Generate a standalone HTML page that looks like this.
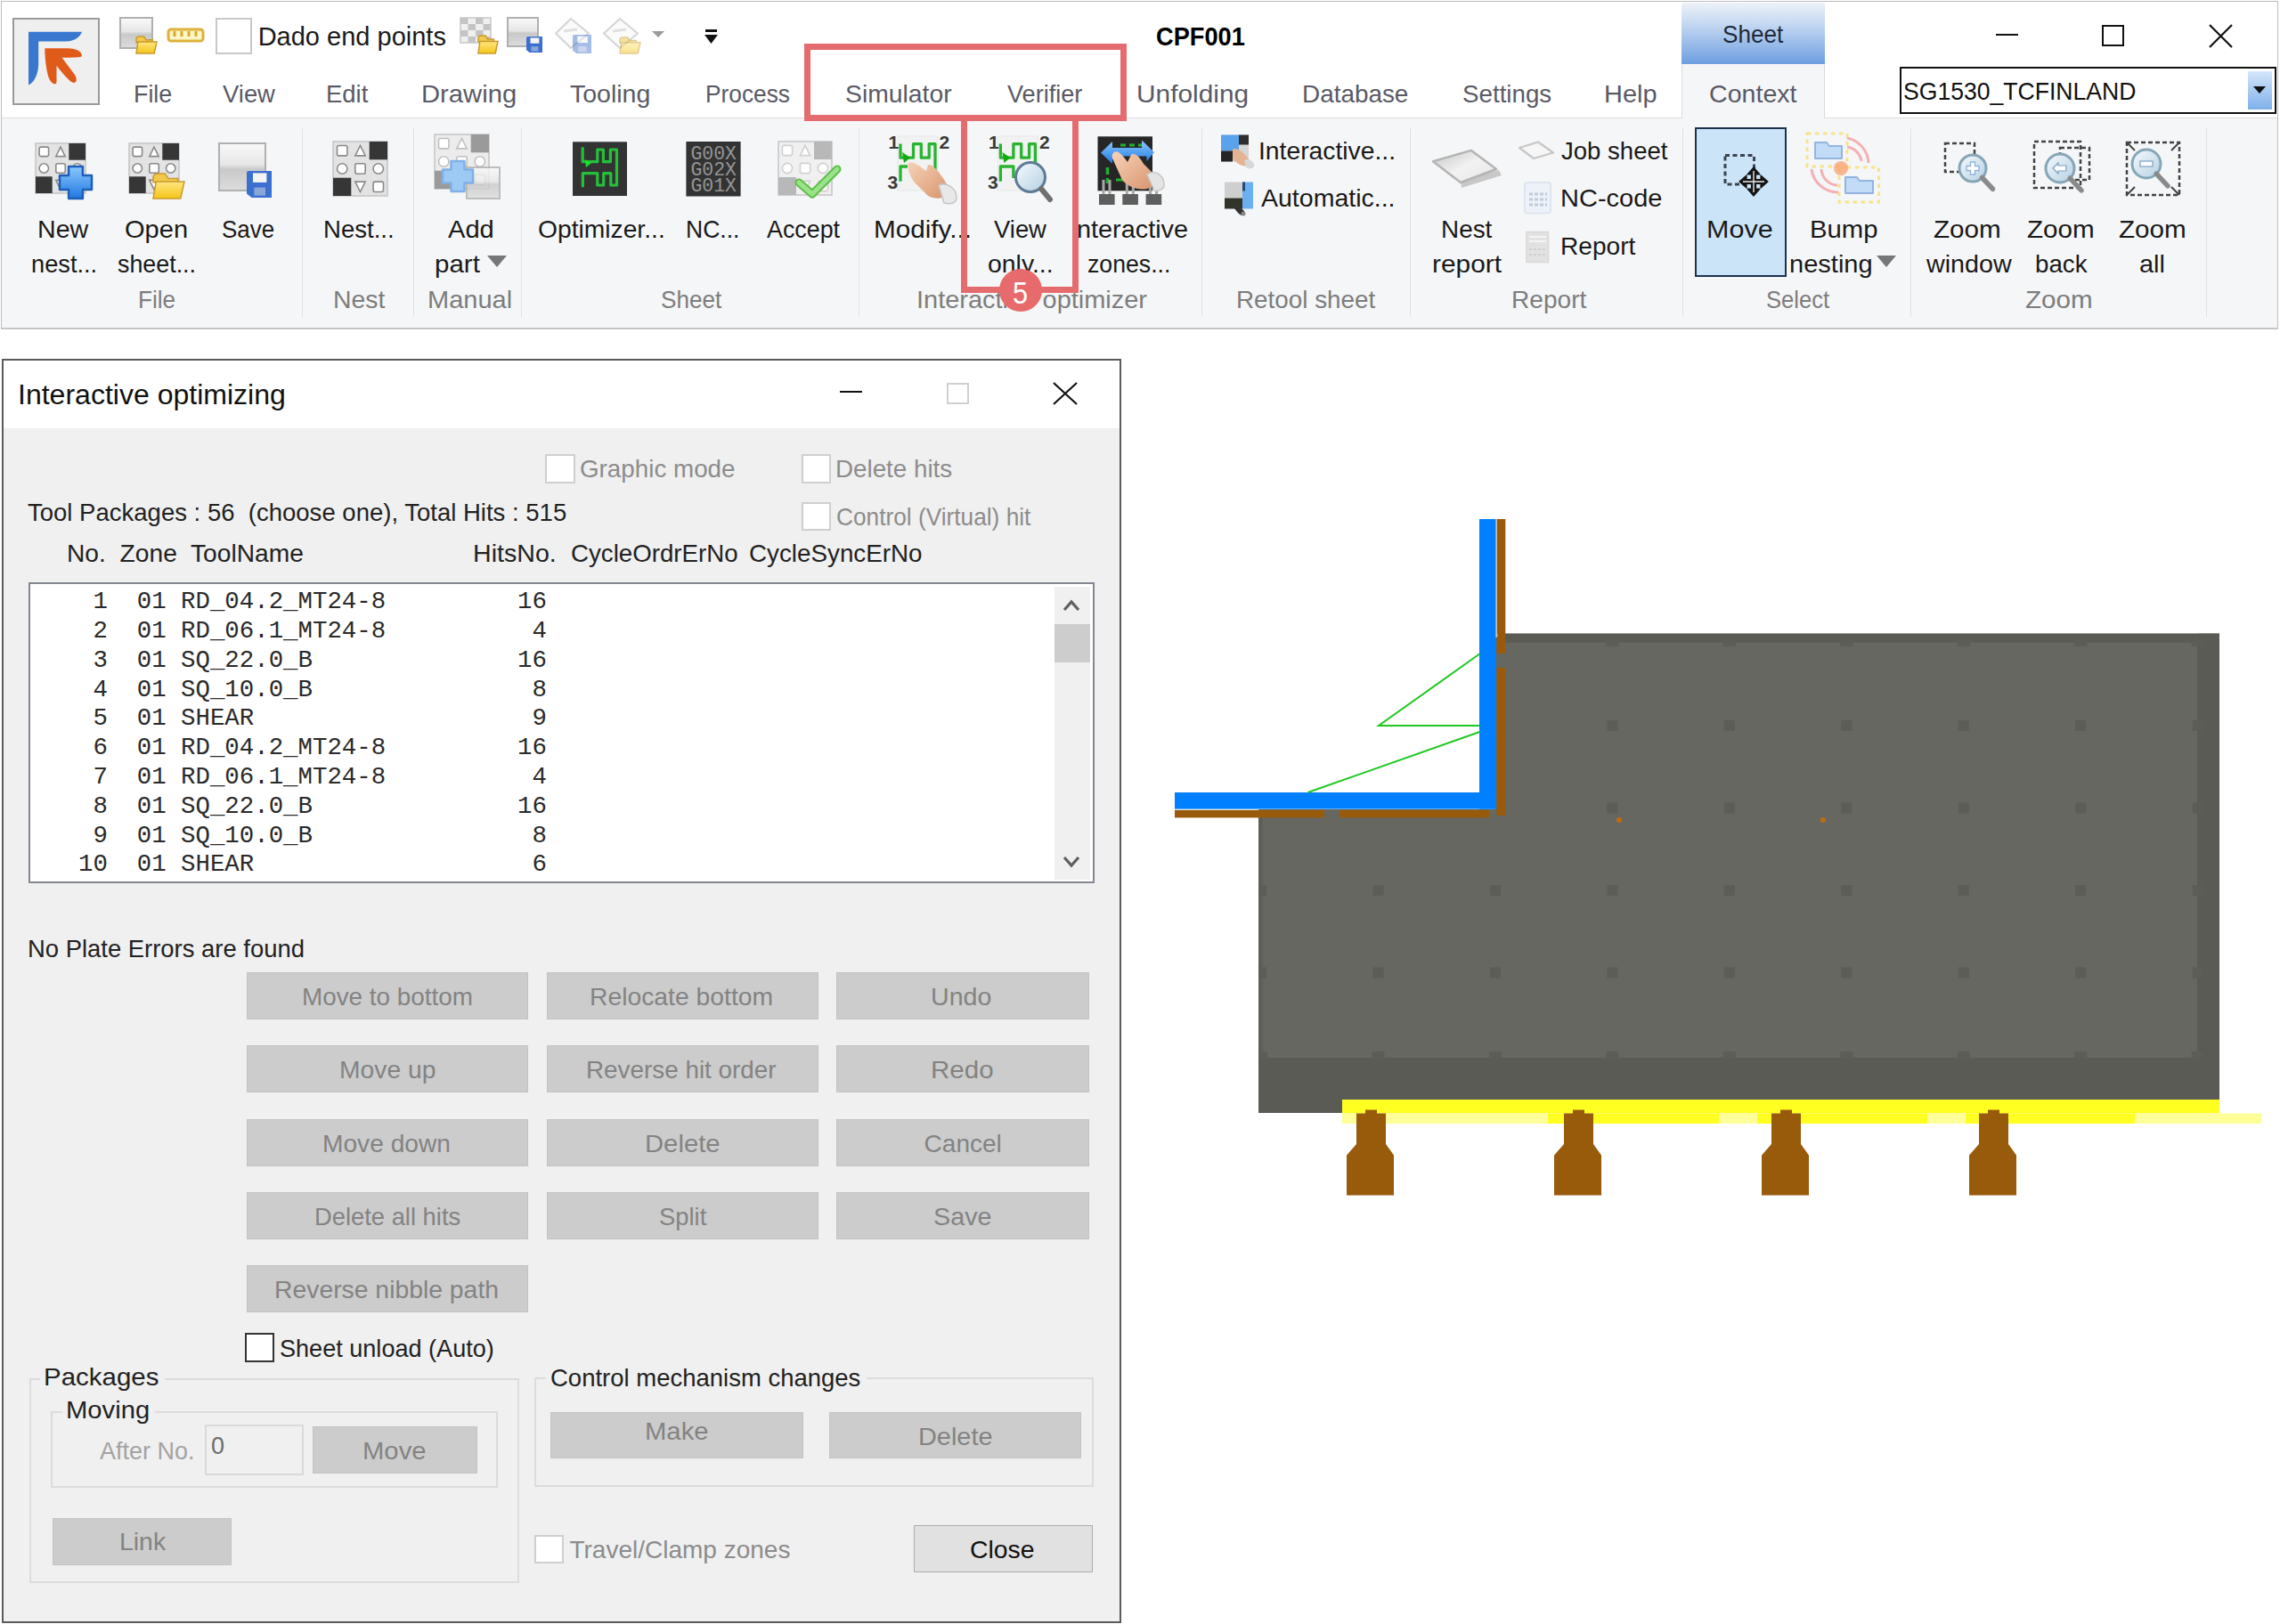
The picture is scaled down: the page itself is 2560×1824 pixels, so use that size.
<!DOCTYPE html>
<html><head><meta charset="utf-8"><style>
html,body{margin:0;padding:0;width:2560px;height:1824px;overflow:hidden;background:#fff}
.t{position:absolute;white-space:pre;line-height:0;transform-origin:0 0}
svg{overflow:visible}
</style></head><body>
<div style="position:absolute;left:0px;top:0px;width:2560px;height:1824px;background:#ffffff"></div>
<div style="position:absolute;left:1px;top:1px;width:2557px;height:369px;border:1px solid #bdbdbd;box-sizing:border-box;background:#ffffff"></div>
<div style="position:absolute;left:2px;top:133px;width:2555px;height:235px;background:#f5f6f7"></div>
<div style="position:absolute;left:2px;top:132px;width:2555px;height:1px;background:#dadbdc"></div>
<div style="position:absolute;left:2px;top:368px;width:2556px;height:2px;background:#c6c6c6"></div>
<div style="position:absolute;left:14px;top:20px;width:98px;height:98px;border:2px solid #9a9a9a;box-sizing:border-box;background:#efefef"></div>
<div style="position:absolute;left:1888px;top:3px;width:161px;height:69px;background:linear-gradient(#eef2f9,#c4d8f2 35%,#6d9ee0)"></div>
<div style="position:absolute;left:1888px;top:72px;width:161px;height:61px;background:#f5f6f7;border-left:1px solid #dadbdc;border-right:1px solid #dadbdc;box-sizing:border-box"></div>
<div style="position:absolute;left:2133px;top:75px;width:423px;height:53px;border:2px solid #111;box-sizing:border-box;background:#fff"></div>
<div style="position:absolute;left:242px;top:20px;width:41px;height:41px;border:2px solid #c8c8c8;box-sizing:border-box;background:#fff"></div>
<div style="position:absolute;left:339px;top:144px;width:1px;height:212px;background:#e1e2e4"></div>
<div style="position:absolute;left:464px;top:144px;width:1px;height:212px;background:#e1e2e4"></div>
<div style="position:absolute;left:585px;top:144px;width:1px;height:212px;background:#e1e2e4"></div>
<div style="position:absolute;left:964px;top:144px;width:1px;height:212px;background:#e1e2e4"></div>
<div style="position:absolute;left:1349px;top:144px;width:1px;height:212px;background:#e1e2e4"></div>
<div style="position:absolute;left:1583px;top:144px;width:1px;height:212px;background:#e1e2e4"></div>
<div style="position:absolute;left:1889px;top:144px;width:1px;height:212px;background:#e1e2e4"></div>
<div style="position:absolute;left:2145px;top:144px;width:1px;height:212px;background:#e1e2e4"></div>
<div style="position:absolute;left:2477px;top:144px;width:1px;height:212px;background:#e1e2e4"></div>
<div style="position:absolute;left:1903px;top:143px;width:103px;height:168px;background:#cce4f7;border:2px solid #1c3350;box-sizing:border-box"></div>
<div style="position:absolute;left:2241px;top:38px;width:25px;height:2px;background:#111"></div>
<div style="position:absolute;left:2360px;top:28px;width:25px;height:24px;border:2px solid #111;box-sizing:border-box"></div>
<div style="position:absolute;left:2524px;top:80px;width:27px;height:43px;background:linear-gradient(#d5e6fa,#7fb0ea)"></div>
<svg style="position:absolute;left:2480px;top:27px" width="27" height="27" viewBox="0 0 27 27"><path d="M1 1L26 26M26 1L1 26" stroke="#111" stroke-width="2.2"/></svg>
<svg style="position:absolute;left:2529px;top:96px" width="16" height="10" viewBox="0 0 16 10"><path d="M1 1H15L8 9Z" fill="#111"/></svg>
<svg style="position:absolute;left:547px;top:287px" width="22" height="13" viewBox="0 0 22 13"><path d="M0 0H22L11 13Z" fill="#777"/></svg>
<svg style="position:absolute;left:2107px;top:287px" width="22" height="13" viewBox="0 0 22 13"><path d="M0 0H22L11 13Z" fill="#777"/></svg>
<svg style="position:absolute;left:0px;top:0px" width="2560" height="370" viewBox="0 0 2560 370"><defs>
<linearGradient id="gSheet" x1="0" y1="0" x2="0" y2="1"><stop offset="0" stop-color="#fafafa"/><stop offset="0.45" stop-color="#e6e6e6"/><stop offset="0.55" stop-color="#c9c9c9"/><stop offset="1" stop-color="#dcdcdc"/></linearGradient>
<linearGradient id="gFolder" x1="0" y1="0" x2="0" y2="1"><stop offset="0" stop-color="#ffe680"/><stop offset="1" stop-color="#f5c518"/></linearGradient>
<linearGradient id="gBlue" x1="0" y1="0" x2="0" y2="1"><stop offset="0" stop-color="#8cc8ff"/><stop offset="1" stop-color="#1f78e0"/></linearGradient>
<linearGradient id="gLens" x1="0" y1="0" x2="1" y2="1"><stop offset="0" stop-color="#f6fafd"/><stop offset="1" stop-color="#b4cfe3"/></linearGradient>
<linearGradient id="gSkin" x1="0" y1="0" x2="1" y2="1"><stop offset="0" stop-color="#f6d2b8"/><stop offset="1" stop-color="#d9956e"/></linearGradient>
</defs><path d="M32 35.7H92C90 41 84 46.5 74 46.5H43.2V72C43 84 38 93 32 95.5Z" fill="#3a78d0"/><path d="M50.3 54.3H76C86 54.3 92 58 92 63C92 64.5 80 64.8 69.6 64.8L84 84C87 89 86 93 83 93C80 93 75 88 63.5 74V92C63.5 96 58 95 55 88C52 80 50.3 65 50.3 54.3Z" fill="#e05a1a"/><rect x="135" y="20" width="36" height="34" fill="url(#gSheet)" stroke="#b0b0b0" stroke-width="2" opacity="1"/><g opacity="1"><path d="M153 43.85Q153 41 156.8 41H161.6L164.0 44.8H171.2V47.65H153Z" fill="#f2c94c" stroke="#c99a2e" stroke-width="1.5"/>
<path d="M154.88 47.08H176L173.12 60H153Z" fill="url(#gFolder)" stroke="#c99a2e" stroke-width="1.5"/></g><rect x="189" y="33" width="39" height="13" rx="3" fill="#fff6c8" stroke="#dcb23a" stroke-width="3"/><path d="M196 35V41" stroke="#d8ac2a" stroke-width="3"/><path d="M204 35V41" stroke="#d8ac2a" stroke-width="3"/><path d="M212 35V41" stroke="#d8ac2a" stroke-width="3"/><path d="M220 35V41" stroke="#d8ac2a" stroke-width="3"/><rect x="517" y="20" width="34" height="28" fill="#f0f0f0" stroke="#c8c8c8" stroke-width="1.5"/><rect x="517.0" y="20" width="8.5" height="7" fill="#c4c4c4"/><rect x="534.0" y="20" width="8.5" height="7" fill="#c4c4c4"/><rect x="525.5" y="27" width="8.5" height="7" fill="#c4c4c4"/><rect x="542.5" y="27" width="8.5" height="7" fill="#c4c4c4"/><rect x="517.0" y="34" width="8.5" height="7" fill="#c4c4c4"/><rect x="534.0" y="34" width="8.5" height="7" fill="#c4c4c4"/><rect x="525.5" y="41" width="8.5" height="7" fill="#c4c4c4"/><rect x="542.5" y="41" width="8.5" height="7" fill="#c4c4c4"/><g opacity="1"><path d="M537 43.0Q537 40 540.6 40H545.2L547.5 44.0H554.4V47.0H537Z" fill="#f2c94c" stroke="#c99a2e" stroke-width="1.5"/>
<path d="M538.76 46.4H559L556.24 60H537Z" fill="url(#gFolder)" stroke="#c99a2e" stroke-width="1.5"/></g><rect x="570" y="20" width="34" height="32" fill="url(#gSheet)" stroke="#b0b0b0" stroke-width="2" opacity="1"/><g opacity="1"><path d="M591 43Q591 41 593 41H609V59H594.6L591 56.3Z" fill="#3b6fd0"/>
<rect x="595.5" y="42.44" width="9.9" height="6.3" fill="#f4f4f4"/>
<rect x="596.4" y="52.16" width="8.1" height="5.3999999999999995" fill="#8aa6d8"/></g><path d="M641 21L661 37.5L641 54L624 37.5Z" fill="#fbfbfb" stroke="#d6d6d6" stroke-width="2.2" stroke-linejoin="round"/><path d="M633 35L648 33" stroke="#e0e0e0" stroke-width="3"/><g opacity="0.45"><path d="M643 41Q643 39 645 39H664V60H647.2L643 56.849999999999994Z" fill="#3b6fd0"/>
<rect x="648.25" y="40.68" width="11.55" height="7.35" fill="#f4f4f4"/>
<rect x="649.3" y="52.019999999999996" width="9.450000000000001" height="6.3" fill="#8aa6d8"/></g><path d="M696 21L716 37.5L696 54L678 37.5Z" fill="#fbfbfb" stroke="#d6d6d6" stroke-width="2.2" stroke-linejoin="round"/><path d="M688 35L703 33" stroke="#e0e0e0" stroke-width="3"/><g opacity="0.5"><path d="M696 44.7Q696 42 699.8 42H704.6L707.0 45.6H714.2V48.3H696Z" fill="#f2c94c" stroke="#c99a2e" stroke-width="1.5"/>
<path d="M697.88 47.76H719L716.12 60H696Z" fill="url(#gFolder)" stroke="#c99a2e" stroke-width="1.5"/></g><path d="M732 35H746L739 42Z" fill="#9a9a9a"/><rect x="792" y="33" width="13" height="3" fill="#111"/><path d="M791 39H806L798.5 49Z" fill="#111"/><rect x="40" y="161" width="56" height="56" fill="#e3e3e3" stroke="#c4c4c4" stroke-width="1.5"/><rect x="77.3" y="161.0" width="18.7" height="18.7" fill="#363636"/><rect x="40.0" y="198.3" width="18.7" height="18.7" fill="#363636"/><rect x="44.1" y="165.1" width="10.5" height="10.5" rx="2" fill="#fff" stroke="#8a8a8a" stroke-width="1.6"/><path d="M68.0 165.1L73.2 175.6H62.8Z" fill="#fff" stroke="#8a8a8a" stroke-width="1.6"/><circle cx="49.3" cy="189.0" r="5.2" fill="#fff" stroke="#8a8a8a" stroke-width="1.6"/><rect x="62.8" y="183.8" width="10.5" height="10.5" rx="2" fill="#fff" stroke="#8a8a8a" stroke-width="1.6"/><circle cx="86.7" cy="189.0" r="5.2" fill="#fff" stroke="#8a8a8a" stroke-width="1.6"/><path d="M68.0 212.9L73.2 202.4H62.8Z" fill="#fff" stroke="#8a8a8a" stroke-width="1.6"/><rect x="81.4" y="202.4" width="10.5" height="10.5" rx="2" fill="#fff" stroke="#8a8a8a" stroke-width="1.6"/><path d="M77.08 187.0H92.92V197.08H103.0V212.92H92.92V223.0H77.08V212.92H67.0V197.08H77.08Z" fill="url(#gBlue)" stroke="#1f5fb8" stroke-width="2.5" stroke-linejoin="round" opacity="1"/><rect x="145" y="161" width="56" height="56" fill="#e3e3e3" stroke="#c4c4c4" stroke-width="1.5"/><rect x="182.3" y="161.0" width="18.7" height="18.7" fill="#363636"/><rect x="145.0" y="198.3" width="18.7" height="18.7" fill="#363636"/><rect x="149.1" y="165.1" width="10.5" height="10.5" rx="2" fill="#fff" stroke="#8a8a8a" stroke-width="1.6"/><path d="M173.0 165.1L178.2 175.6H167.8Z" fill="#fff" stroke="#8a8a8a" stroke-width="1.6"/><circle cx="154.3" cy="189.0" r="5.2" fill="#fff" stroke="#8a8a8a" stroke-width="1.6"/><rect x="167.8" y="183.8" width="10.5" height="10.5" rx="2" fill="#fff" stroke="#8a8a8a" stroke-width="1.6"/><circle cx="191.7" cy="189.0" r="5.2" fill="#fff" stroke="#8a8a8a" stroke-width="1.6"/><path d="M173.0 212.9L178.2 202.4H167.8Z" fill="#fff" stroke="#8a8a8a" stroke-width="1.6"/><rect x="186.4" y="202.4" width="10.5" height="10.5" rx="2" fill="#fff" stroke="#8a8a8a" stroke-width="1.6"/><g opacity="1"><path d="M172 199.2Q172 195 178.2 195H185.4L189.0 200.6H199.8V204.8H172Z" fill="#f2c94c" stroke="#c99a2e" stroke-width="1.5"/>
<path d="M175.32 203.96H207L202.68 223H172Z" fill="url(#gFolder)" stroke="#c99a2e" stroke-width="1.5"/></g><rect x="246" y="161" width="52" height="53" fill="url(#gSheet)" stroke="#b0b0b0" stroke-width="2" opacity="1"/><g opacity="1"><path d="M277 194Q277 192 279 192H305V222H282.6L277 217.5Z" fill="#3b6fd0"/>
<rect x="284.0" y="194.4" width="15.400000000000002" height="10.5" fill="#f4f4f4"/>
<rect x="285.4" y="210.6" width="12.6" height="9.0" fill="#8aa6d8"/></g><rect x="374" y="159" width="61" height="61" fill="#e3e3e3" stroke="#c4c4c4" stroke-width="1.5"/><rect x="414.7" y="159.0" width="20.3" height="20.3" fill="#363636"/><rect x="374.0" y="199.7" width="20.3" height="20.3" fill="#363636"/><rect x="378.5" y="163.5" width="11.4" height="11.4" rx="2" fill="#fff" stroke="#8a8a8a" stroke-width="1.6"/><path d="M404.5 163.5L410.2 174.9H398.8Z" fill="#fff" stroke="#8a8a8a" stroke-width="1.6"/><circle cx="384.2" cy="189.5" r="5.7" fill="#fff" stroke="#8a8a8a" stroke-width="1.6"/><rect x="398.8" y="183.8" width="11.4" height="11.4" rx="2" fill="#fff" stroke="#8a8a8a" stroke-width="1.6"/><circle cx="424.8" cy="189.5" r="5.7" fill="#fff" stroke="#8a8a8a" stroke-width="1.6"/><path d="M404.5 215.5L410.2 204.1H398.8Z" fill="#fff" stroke="#8a8a8a" stroke-width="1.6"/><rect x="419.1" y="204.1" width="11.4" height="11.4" rx="2" fill="#fff" stroke="#8a8a8a" stroke-width="1.6"/><rect x="488" y="151" width="61" height="61" fill="#ececec" stroke="#c4c4c4" stroke-width="1.5"/><rect x="528.7" y="151.0" width="20.3" height="20.3" fill="#9a9a9a"/><rect x="488.0" y="191.7" width="20.3" height="20.3" fill="#9a9a9a"/><rect x="492.5" y="155.5" width="11.4" height="11.4" rx="2" fill="#fff" stroke="#c0c0c0" stroke-width="1.6"/><path d="M518.5 155.5L524.2 166.9H512.8Z" fill="#fff" stroke="#c0c0c0" stroke-width="1.6"/><circle cx="498.2" cy="181.5" r="5.7" fill="#fff" stroke="#c0c0c0" stroke-width="1.6"/><rect x="512.8" y="175.8" width="11.4" height="11.4" rx="2" fill="#fff" stroke="#c0c0c0" stroke-width="1.6"/><circle cx="538.8" cy="181.5" r="5.7" fill="#fff" stroke="#c0c0c0" stroke-width="1.6"/><path d="M518.5 207.5L524.2 196.1H512.8Z" fill="#fff" stroke="#c0c0c0" stroke-width="1.6"/><rect x="533.1" y="196.1" width="11.4" height="11.4" rx="2" fill="#fff" stroke="#c0c0c0" stroke-width="1.6"/><rect x="524" y="188" width="37" height="35" fill="url(#gSheet)" stroke="#b0b0b0" stroke-width="2" opacity="0.8"/><path d="M506.52 181.0H521.48V190.52H531.0V205.48H521.48V215.0H506.52V205.48H497.0V190.52H506.52Z" fill="#9ccaf5" stroke="#7fb0e6" stroke-width="2.5" stroke-linejoin="round" opacity="1"/><rect x="643" y="159.3" width="61" height="60.7" fill="#333"/><path d="M654.2 166.6V181.7H670.8V168H677.4V181.7H685.4V168H692.5V208H685.8V194.7H677.7V208H670.8V194.7H654.4V209" stroke="#25c03a" stroke-width="3.2" fill="none" stroke-linejoin="round" stroke-linecap="round"/><path d="M657 179L664 183L658 188Z" fill="#1fdc30"/><rect x="770.4" y="159" width="61.2" height="61.5" fill="#333"/><text x="775.5" y="179.2" font-family="Liberation Mono" font-size="22" fill="#959595" textLength="51.5" lengthAdjust="spacingAndGlyphs">G00X</text><text x="775.5" y="197.2" font-family="Liberation Mono" font-size="22" fill="#959595" textLength="51.5" lengthAdjust="spacingAndGlyphs">G02X</text><text x="775.5" y="215.2" font-family="Liberation Mono" font-size="22" fill="#959595" textLength="51.5" lengthAdjust="spacingAndGlyphs">G01X</text><rect x="874" y="159" width="60" height="60" fill="#f0f0f0" stroke="#c4c4c4" stroke-width="1.5"/><rect x="914.0" y="159.0" width="20.0" height="20.0" fill="#b8b8b8"/><rect x="874.0" y="199.0" width="20.0" height="20.0" fill="#b8b8b8"/><rect x="878.4" y="163.4" width="11.2" height="11.2" rx="2" fill="#fff" stroke="#d0d0d0" stroke-width="1.6"/><path d="M904.0 163.4L909.6 174.6H898.4Z" fill="#fff" stroke="#d0d0d0" stroke-width="1.6"/><circle cx="884.0" cy="189.0" r="5.6" fill="#fff" stroke="#d0d0d0" stroke-width="1.6"/><rect x="898.4" y="183.4" width="11.2" height="11.2" rx="2" fill="#fff" stroke="#d0d0d0" stroke-width="1.6"/><circle cx="924.0" cy="189.0" r="5.6" fill="#fff" stroke="#d0d0d0" stroke-width="1.6"/><path d="M904.0 214.6L909.6 203.4H898.4Z" fill="#fff" stroke="#d0d0d0" stroke-width="1.6"/><rect x="918.4" y="203.4" width="11.2" height="11.2" rx="2" fill="#fff" stroke="#d0d0d0" stroke-width="1.6"/><path d="M897 205L912 218L940 190" stroke="#5fbf4a" stroke-width="9" fill="none" stroke-linecap="round" stroke-linejoin="round"/><path d="M897 205L912 218L940 190" stroke="#9be38a" stroke-width="5" fill="none" stroke-linecap="round" stroke-linejoin="round"/><rect x="1008" y="153" width="45" height="61" fill="#f2f2f2" stroke="#e8e8e8"/><text x="997.5" y="166.8" font-family="Liberation Sans" font-weight="bold" font-size="21" fill="#3a3a3a">1</text><text x="1054.5" y="166.8" font-family="Liberation Sans" font-weight="bold" font-size="21" fill="#3a3a3a">2</text><text x="996.5" y="212.2" font-family="Liberation Sans" font-weight="bold" font-size="21" fill="#3a3a3a">3</text><path d="M1011 161.6V177.2H1025.5V161.6H1034.3V177.2H1043.2V161.6H1050V191M1011 203.8V187H1019" stroke="#27b52f" stroke-width="3.3" fill="none" stroke-linejoin="round"/><path d="M1013 171L1022 177L1015 183Z" fill="#11aa11"/><path d="M1020 183C1024 180 1032 186 1040 192L1042 185C1046 184 1052 190 1056 196C1062 204 1066 210 1062 218C1058 224 1050 224 1042 220L1026 204C1022 198 1018 188 1020 183Z" fill="url(#gSkin)"/><path d="M1054 208C1064 204 1074 212 1074 222C1074 228 1068 230 1060 228Z" fill="#e8e8e8" stroke="#c4c4c4" stroke-width="1.5"/><rect x="1120.4" y="153" width="45" height="61" fill="#f2f2f2" stroke="#e8e8e8"/><text x="1109.9" y="166.8" font-family="Liberation Sans" font-weight="bold" font-size="21" fill="#3a3a3a">1</text><text x="1166.9" y="166.8" font-family="Liberation Sans" font-weight="bold" font-size="21" fill="#3a3a3a">2</text><text x="1108.9" y="212.2" font-family="Liberation Sans" font-weight="bold" font-size="21" fill="#3a3a3a">3</text><path d="M1123.4 161.6V177.2H1137.9V161.6H1146.7V177.2H1155.6000000000001V161.6H1162.4V191M1123.4 203.8V187H1137.9V200" stroke="#27b52f" stroke-width="3.3" fill="none" stroke-linejoin="round"/><path d="M1125.4 171L1134.4 177L1127.4 183Z" fill="#11aa11"/><circle cx="1157" cy="199" r="16.5" fill="url(#gLens)" stroke="#5d7b96" stroke-width="3"/><path d="M1169 212L1179 224" stroke="#707070" stroke-width="6" stroke-linecap="round"/><rect x="1232.5" y="153.3" width="61.5" height="61" fill="#262626"/><path d="M1258 163H1282" stroke="#22b030" stroke-width="3" stroke-dasharray="6 4"/><path d="M1243.5 188V206" stroke="#22b030" stroke-width="3.5" stroke-dasharray="8 4"/><path d="M1253 202H1263" stroke="#22b030" stroke-width="3"/><path d="M1236 171.5L1249 159V166H1282V157.5L1296 171L1287.5 181V175.5H1249V184Z" fill="url(#gBlue)"/><rect x="1234.0" y="218" width="17.6" height="12" fill="#5e5e5e"/><rect x="1237.5" y="202" width="3" height="16" fill="#a8a8a8"/><rect x="1244.5" y="202" width="3" height="16" fill="#a8a8a8"/><rect x="1260.3" y="218" width="17.6" height="12" fill="#5e5e5e"/><rect x="1263.8" y="202" width="3" height="16" fill="#a8a8a8"/><rect x="1270.8" y="202" width="3" height="16" fill="#a8a8a8"/><rect x="1286.6" y="218" width="17.6" height="12" fill="#5e5e5e"/><rect x="1290.1" y="202" width="3" height="16" fill="#a8a8a8"/><rect x="1297.1" y="202" width="3" height="16" fill="#a8a8a8"/><path d="M1251 171C1255 168 1262 176 1266 182L1270 174C1273 170 1280 176 1284 184L1292 192C1298 200 1296 210 1288 212C1278 214 1266 210 1260 202L1250 180C1248 176 1248 173 1251 171Z" fill="url(#gSkin)"/><path d="M1288 196C1296 190 1306 196 1307 206C1308 212 1302 215 1296 214Z" fill="#e4e4e4" stroke="#c8c8c8" stroke-width="1.5"/><rect x="1371" y="151.5" width="31" height="30" fill="#d6d6d6"/><rect x="1371" y="151.5" width="20" height="18" fill="#5aa2ea"/><rect x="1391" y="151.5" width="11" height="11" fill="#2e2e2e"/><rect x="1371" y="169.5" width="13" height="12" fill="#262626"/><path d="M1384 168C1388 165 1394 170 1398 174C1404 180 1406 184 1402 186C1396 188 1388 184 1384 178Z" fill="#e3b393"/><path d="M1397 180C1403 177 1409 182 1408 187C1407 190 1402 190 1399 188Z" fill="#d8d8d8"/><rect x="1375" y="204.5" width="20" height="18" fill="#cfcfcf"/><rect x="1395" y="204.5" width="12" height="30" fill="#6ab0f0"/><rect x="1395" y="204.5" width="3" height="10" fill="#234a78"/><rect x="1375" y="222.5" width="20" height="12" fill="#303428"/><path d="M1388 228L1396 236C1399 239 1398 242 1395 242C1392 242 1389 238 1386 234Z" fill="#333"/><circle cx="1396" cy="240" r="2.5" fill="#888"/><defs><linearGradient id="gNR" x1="0" y1="0" x2="1" y2="1"><stop offset="0" stop-color="#c4c4c4"/><stop offset="0.5" stop-color="#f2f2f2"/><stop offset="1" stop-color="#e6e6e6"/></linearGradient></defs><path d="M1640 203L1683 191L1686 197L1641 211Z" fill="#c8c8c8"/><path d="M1609 181.3L1652 168.9L1680 190L1640 205Z" fill="url(#gNR)" stroke="#b4b4b4" stroke-width="2.5" stroke-linejoin="round"/><path d="M1706 166L1727 159.5L1744 171.5L1722 178Z" fill="#f6f6f6" stroke="#c6c6c6" stroke-width="2.2" stroke-linejoin="round"/><rect x="1712" y="205" width="29" height="34.5" rx="3" fill="#edf1f8" stroke="#dfe5f0" stroke-width="2"/><path d="M1717 218H1737M1717 224H1737M1717 230H1737" stroke="#c3cbda" stroke-width="3" stroke-dasharray="4 2"/><rect x="1714" y="260.5" width="24.5" height="34" fill="#e2e2e2" stroke="#d8d8d8" stroke-width="1.5"/><path d="M1717 266H1736M1717 271H1736" stroke="#f4f4f4" stroke-width="2"/><path d="M1717 280H1736M1717 286H1736" stroke="#d0d0d0" stroke-width="2" stroke-dasharray="3 2"/><path d="M1937 174.5H1969.5V190M1953 207H1937V174.5" fill="none" stroke="#3a4550" stroke-width="3" stroke-dasharray="5 3.5"/><g transform="translate(1969 204)"><path d="M0 -16L7 -8H2.5V-2.5H8V-7L16 0L8 7V2.5H2.5V8H7L0 16L-7 8H-2.5V2.5H-8V7L-16 0L-8 -7V-2.5H-2.5V-8H-7Z" fill="#141414" stroke="#141414" stroke-width="1.2" stroke-linejoin="round"/><path d="M0 -12V12M-12 0H12" stroke="#e8e8e8" stroke-width="1.4"/></g><rect x="2029" y="150" width="45" height="37" fill="none" stroke="#f7e38a" stroke-width="3" stroke-dasharray="4.5 4.5"/><rect x="2065" y="188" width="44.5" height="39" fill="none" stroke="#f7e38a" stroke-width="3" stroke-dasharray="4.5 4.5"/><path d="M2074 155A30 30 0 0 1 2098 183M2074 165A19 19 0 0 1 2090 181M2064 216A30 30 0 0 1 2034 190M2063 208A19 19 0 0 1 2045 190" stroke="#f4b0b4" stroke-width="3" fill="none"/><circle cx="2067" cy="189" r="8" fill="#f9a070" opacity="0.75"/><path d="M2038 160H2051L2054 164H2068V178H2038Z" fill="#c2dbf6" stroke="#94b4e0" stroke-width="2" stroke-linejoin="round"/><path d="M2072 199H2085L2088 203H2103V217H2072Z" fill="#c2dbf6" stroke="#94b4e0" stroke-width="2" stroke-linejoin="round"/><rect x="2184" y="161" width="33" height="32" fill="none" stroke="#444" stroke-width="2.5" stroke-dasharray="5 3"/><circle cx="2215" cy="189" r="15" fill="url(#gLens)" stroke="#86a6b8" stroke-width="3"/><path d="M2225.5 199.5L2237.5 212.25" stroke="#8a8a8a" stroke-width="5.5" stroke-linecap="round"/><path d="M2212.5 182H2217.5V186.5H2222V191.5H2217.5V196H2212.5V191.5H2208V186.5H2212.5Z" fill="#fff" stroke="#8fb0d8" stroke-width="1.3"/><rect x="2284" y="159" width="52" height="52" fill="none" stroke="#444" stroke-width="2.5" stroke-dasharray="5 3"/><rect x="2313" y="166" width="33" height="36" fill="none" stroke="#444" stroke-width="2.5" stroke-dasharray="5 3"/><circle cx="2313" cy="189" r="16" fill="url(#gLens)" stroke="#86a6b8" stroke-width="3"/><path d="M2324.2 200.2L2337.0 213.8" stroke="#8a8a8a" stroke-width="5.5" stroke-linecap="round"/><path d="M2305 189L2311 183V186H2320V192H2311V195Z" fill="#fff" stroke="#7da0c0" stroke-width="1.2"/><rect x="2388" y="160" width="59" height="59" fill="none" stroke="#444" stroke-width="2.5" stroke-dasharray="5 3"/><path d="M2388 160L2397 169M2447 160L2438 169M2388 219L2397 210M2447 219L2438 210" stroke="#444" stroke-width="2"/><circle cx="2410" cy="184" r="16" fill="url(#gLens)" stroke="#86a6b8" stroke-width="3"/><path d="M2421.2 195.2L2434.0 208.8" stroke="#8a8a8a" stroke-width="5.5" stroke-linecap="round"/><rect x="2403" y="181" width="14" height="6" fill="#fff" stroke="#7da0c0" stroke-width="1.2"/></svg>
<svg style="position:absolute;left:1400px;top:570px" width="1160" height="800" viewBox="1400 570 1160 800">
<defs><clipPath id="plateClip"><path d="M1689 711.5H2492V1250H1413V909H1679V716H1689Z"/></clipPath></defs><path d="M1689 711.5H2492V1250H1413V909H1679V716H1689Z" fill="#676761"/><g clip-path="url(#plateClip)">
<rect x="1689" y="711.5" width="803" height="10" fill="#5b5b55"/>
<rect x="2467" y="711.5" width="25" height="538.5" fill="#5b5b55"/>
<rect x="1413" y="1188" width="1079" height="62" fill="#5b5b55"/>
<rect x="1413" y="918" width="5" height="270" fill="#5f5f59"/>
<rect x="1410.0" y="994" width="12" height="12" fill="#5d5d57"/><rect x="1410.0" y="1086.5" width="12" height="12" fill="#5d5d57"/><rect x="1541.47" y="994" width="12" height="12" fill="#5d5d57"/><rect x="1541.47" y="1086.5" width="12" height="12" fill="#5d5d57"/><rect x="1672.94" y="994" width="12" height="12" fill="#5d5d57"/><rect x="1672.94" y="1086.5" width="12" height="12" fill="#5d5d57"/><rect x="1804.4099999999999" y="809" width="12" height="12" fill="#5d5d57"/><rect x="1804.4099999999999" y="901.5" width="12" height="12" fill="#5d5d57"/><rect x="1804.4099999999999" y="994" width="12" height="12" fill="#5d5d57"/><rect x="1804.4099999999999" y="1086.5" width="12" height="12" fill="#5d5d57"/><rect x="1935.88" y="809" width="12" height="12" fill="#5d5d57"/><rect x="1935.88" y="901.5" width="12" height="12" fill="#5d5d57"/><rect x="1935.88" y="994" width="12" height="12" fill="#5d5d57"/><rect x="1935.88" y="1086.5" width="12" height="12" fill="#5d5d57"/><rect x="2067.35" y="809" width="12" height="12" fill="#5d5d57"/><rect x="2067.35" y="901.5" width="12" height="12" fill="#5d5d57"/><rect x="2067.35" y="994" width="12" height="12" fill="#5d5d57"/><rect x="2067.35" y="1086.5" width="12" height="12" fill="#5d5d57"/><rect x="2198.8199999999997" y="809" width="12" height="12" fill="#5d5d57"/><rect x="2198.8199999999997" y="901.5" width="12" height="12" fill="#5d5d57"/><rect x="2198.8199999999997" y="994" width="12" height="12" fill="#5d5d57"/><rect x="2198.8199999999997" y="1086.5" width="12" height="12" fill="#5d5d57"/><rect x="2330.29" y="809" width="12" height="12" fill="#5d5d57"/><rect x="2330.29" y="901.5" width="12" height="12" fill="#5d5d57"/><rect x="2330.29" y="994" width="12" height="12" fill="#5d5d57"/><rect x="2330.29" y="1086.5" width="12" height="12" fill="#5d5d57"/><rect x="2461.76" y="809" width="12" height="12" fill="#5d5d57"/><rect x="2461.76" y="901.5" width="12" height="12" fill="#5d5d57"/><rect x="2461.76" y="994" width="12" height="12" fill="#5d5d57"/><rect x="2461.76" y="1086.5" width="12" height="12" fill="#5d5d57"/><rect x="1803.4" y="718" width="14" height="8" fill="#5d5d57"/><rect x="1934.8700000000001" y="718" width="14" height="8" fill="#5d5d57"/><rect x="2066.34" y="718" width="14" height="8" fill="#5d5d57"/><rect x="2197.81" y="718" width="14" height="8" fill="#5d5d57"/><rect x="2329.28" y="718" width="14" height="8" fill="#5d5d57"/><rect x="2460.75" y="718" width="14" height="8" fill="#5d5d57"/><rect x="1409.0" y="1181" width="14" height="8" fill="#5d5d57"/><rect x="1540.47" y="1181" width="14" height="8" fill="#5d5d57"/><rect x="1671.94" y="1181" width="14" height="8" fill="#5d5d57"/><rect x="1803.4099999999999" y="1181" width="14" height="8" fill="#5d5d57"/><rect x="1934.88" y="1181" width="14" height="8" fill="#5d5d57"/><rect x="2066.35" y="1181" width="14" height="8" fill="#5d5d57"/><rect x="2197.8199999999997" y="1181" width="14" height="8" fill="#5d5d57"/><rect x="2329.29" y="1181" width="14" height="8" fill="#5d5d57"/><rect x="2460.76" y="1181" width="14" height="8" fill="#5d5d57"/></g>
<rect x="1319" y="890" width="360" height="18.6" fill="#0080ff"/>
<rect x="1661" y="583" width="18.6" height="325.6" fill="#0080ff"/>
<rect x="1680.6" y="583" width="9.7" height="151" fill="#985a0b"/>
<rect x="1680.6" y="750" width="9.7" height="166" fill="#985a0b"/>
<rect x="1680.6" y="712.5" width="1.2" height="1.2" fill="#e8d8c0"/>
<rect x="1319" y="909.8" width="168" height="8.6" fill="#985a0b"/>
<rect x="1504" y="909.8" width="168" height="8.6" fill="#985a0b"/>
<path d="M1661.5 734.3L1548 815H1661.5M1661.5 822L1468.5 890" stroke="#1fc81f" stroke-width="2" fill="none"/>
<circle cx="1818" cy="921" r="3" fill="#c06a10"/>
<circle cx="2047" cy="921" r="3" fill="#c06a10"/>
<rect x="1507" y="1235" width="985" height="15.5" fill="#ffff22"/>
<rect x="1507" y="1250.5" width="1032" height="11.5" fill="#ffff99"/><rect x="1738" y="1250.5" width="192" height="11.5" fill="#ffff22"/><rect x="1973" y="1250.5" width="191" height="11.5" fill="#ffff22"/><rect x="2207" y="1250.5" width="190" height="11.5" fill="#ffff22"/>
</svg>
<svg style="position:absolute;left:1400px;top:570px" width="1160" height="800" viewBox="1400 570 1160 800"><path d="M1523 1250.5H1556V1285L1565 1297.5V1342.5H1512V1297.5L1523 1285Z" fill="#985a0b"/>
<rect x="1533" y="1246.5" width="13" height="12" fill="#985a0b"/><path d="M1756 1250.5H1789V1285L1798 1297.5V1342.5H1745V1297.5L1756 1285Z" fill="#985a0b"/>
<rect x="1766" y="1246.5" width="13" height="12" fill="#985a0b"/><path d="M1989 1250.5H2022V1285L2031 1297.5V1342.5H1978V1297.5L1989 1285Z" fill="#985a0b"/>
<rect x="1999" y="1246.5" width="13" height="12" fill="#985a0b"/><path d="M2222 1250.5H2255V1285L2264 1297.5V1342.5H2211V1297.5L2222 1285Z" fill="#985a0b"/>
<rect x="2232" y="1246.5" width="13" height="12" fill="#985a0b"/></svg>
<div class="t" style="left:149.85px;top:106.10px;font-size:28px;color:#5a5a66;font-weight:normal;font-family:'Liberation Sans', sans-serif;transform:scaleX(0.9587);">File</div>
<div class="t" style="left:250.00px;top:106.10px;font-size:28px;color:#5a5a66;font-weight:normal;font-family:'Liberation Sans', sans-serif;transform:scaleX(0.9790);">View</div>
<div class="t" style="left:365.81px;top:106.10px;font-size:28px;color:#5a5a66;font-weight:normal;font-family:'Liberation Sans', sans-serif;transform:scaleX(0.9798);">Edit</div>
<div class="t" style="left:472.66px;top:106.10px;font-size:28px;color:#5a5a66;font-weight:normal;font-family:'Liberation Sans', sans-serif;transform:scaleX(1.0430);">Drawing</div>
<div class="t" style="left:640.43px;top:106.10px;font-size:28px;color:#5a5a66;font-weight:normal;font-family:'Liberation Sans', sans-serif;transform:scaleX(1.0178);">Tooling</div>
<div class="t" style="left:791.90px;top:106.10px;font-size:28px;color:#5a5a66;font-weight:normal;font-family:'Liberation Sans', sans-serif;transform:scaleX(0.9395);">Process</div>
<div class="t" style="left:948.73px;top:106.10px;font-size:28px;color:#5a5a66;font-weight:normal;font-family:'Liberation Sans', sans-serif;transform:scaleX(1.0117);">Simulator</div>
<div class="t" style="left:1131.00px;top:106.10px;font-size:28px;color:#5a5a66;font-weight:normal;font-family:'Liberation Sans', sans-serif;transform:scaleX(0.9680);">Verifier</div>
<div class="t" style="left:1275.76px;top:106.10px;font-size:28px;color:#5a5a66;font-weight:normal;font-family:'Liberation Sans', sans-serif;transform:scaleX(1.0656);">Unfolding</div>
<div class="t" style="left:1461.77px;top:106.10px;font-size:28px;color:#5a5a66;font-weight:normal;font-family:'Liberation Sans', sans-serif;transform:scaleX(0.9960);">Database</div>
<div class="t" style="left:1641.75px;top:106.10px;font-size:28px;color:#5a5a66;font-weight:normal;font-family:'Liberation Sans', sans-serif;transform:scaleX(0.9906);">Settings</div>
<div class="t" style="left:1800.69px;top:106.10px;font-size:28px;color:#5a5a66;font-weight:normal;font-family:'Liberation Sans', sans-serif;transform:scaleX(1.0333);">Help</div>
<div class="t" style="left:1933.82px;top:39.10px;font-size:28px;color:#1e2a3a;font-weight:normal;font-family:'Liberation Sans', sans-serif;transform:scaleX(0.9327);">Sheet</div>
<div class="t" style="left:1918.57px;top:106.10px;font-size:28px;color:#5a5a66;font-weight:normal;font-family:'Liberation Sans', sans-serif;transform:scaleX(1.0209);">Context</div>
<div class="t" style="left:289.68px;top:40.75px;font-size:29px;color:#1a1a1a;font-weight:normal;font-family:'Liberation Sans', sans-serif;">Dado end points</div>
<div class="t" style="left:1297.91px;top:40.75px;font-size:29px;color:#000;font-weight:bold;font-family:'Liberation Sans', sans-serif;transform:scaleX(0.9381);">CPF001</div>
<div class="t" style="left:2136.80px;top:103.10px;font-size:28px;color:#111;font-weight:normal;font-family:'Liberation Sans', sans-serif;transform:scaleX(0.9492);">SG1530_TCFINLAND</div>
<div class="t" style="left:154.91px;top:337.10px;font-size:28px;color:#7d7d7d;font-weight:normal;font-family:'Liberation Sans', sans-serif;transform:scaleX(0.9347);">File</div>
<div class="t" style="left:373.73px;top:337.10px;font-size:28px;color:#7d7d7d;font-weight:normal;font-family:'Liberation Sans', sans-serif;transform:scaleX(1.0135);">Nest</div>
<div class="t" style="left:479.68px;top:337.10px;font-size:28px;color:#7d7d7d;font-weight:normal;font-family:'Liberation Sans', sans-serif;transform:scaleX(1.0358);">Manual</div>
<div class="t" style="left:741.82px;top:337.10px;font-size:28px;color:#7d7d7d;font-weight:normal;font-family:'Liberation Sans', sans-serif;transform:scaleX(0.9327);">Sheet</div>
<div class="t" style="left:1029.40px;top:337.10px;font-size:28px;color:#7d7d7d;font-weight:normal;font-family:'Liberation Sans', sans-serif;transform:scaleX(1.0337);">Interactive optimizer</div>
<div class="t" style="left:1387.77px;top:337.10px;font-size:28px;color:#7d7d7d;font-weight:normal;font-family:'Liberation Sans', sans-serif;transform:scaleX(0.9942);">Retool sheet</div>
<div class="t" style="left:1696.75px;top:337.10px;font-size:28px;color:#7d7d7d;font-weight:normal;font-family:'Liberation Sans', sans-serif;transform:scaleX(1.0034);">Report</div>
<div class="t" style="left:1982.85px;top:337.10px;font-size:28px;color:#7d7d7d;font-weight:normal;font-family:'Liberation Sans', sans-serif;transform:scaleX(0.9153);">Select</div>
<div class="t" style="left:2274.11px;top:337.10px;font-size:28px;color:#7d7d7d;font-weight:normal;font-family:'Liberation Sans', sans-serif;transform:scaleX(1.0585);">Zoom</div>
<div class="t" style="left:41.71px;top:258.10px;font-size:28px;color:#1a1a1a;font-weight:normal;font-family:'Liberation Sans', sans-serif;transform:scaleX(1.0213);">New</div>
<div class="t" style="left:35.23px;top:297.10px;font-size:28px;color:#1a1a1a;font-weight:normal;font-family:'Liberation Sans', sans-serif;transform:scaleX(0.9725);">nest...</div>
<div class="t" style="left:139.69px;top:258.10px;font-size:28px;color:#1a1a1a;font-weight:normal;font-family:'Liberation Sans', sans-serif;transform:scaleX(1.0378);">Open</div>
<div class="t" style="left:132.33px;top:297.10px;font-size:28px;color:#1a1a1a;font-weight:normal;font-family:'Liberation Sans', sans-serif;transform:scaleX(0.9586);">sheet...</div>
<div class="t" style="left:248.83px;top:258.10px;font-size:28px;color:#1a1a1a;font-weight:normal;font-family:'Liberation Sans', sans-serif;transform:scaleX(0.9282);">Save</div>
<div class="t" style="left:362.80px;top:258.10px;font-size:28px;color:#1a1a1a;font-weight:normal;font-family:'Liberation Sans', sans-serif;transform:scaleX(0.9841);">Nest...</div>
<div class="t" style="left:503.00px;top:258.10px;font-size:28px;color:#1a1a1a;font-weight:normal;font-family:'Liberation Sans', sans-serif;transform:scaleX(1.0393);">Add</div>
<div class="t" style="left:488.23px;top:297.10px;font-size:28px;color:#1a1a1a;font-weight:normal;font-family:'Liberation Sans', sans-serif;transform:scaleX(1.0540);">part</div>
<div class="t" style="left:603.73px;top:258.10px;font-size:28px;color:#1a1a1a;font-weight:normal;font-family:'Liberation Sans', sans-serif;transform:scaleX(1.0082);">Optimizer...</div>
<div class="t" style="left:769.88px;top:258.10px;font-size:28px;color:#1a1a1a;font-weight:normal;font-family:'Liberation Sans', sans-serif;transform:scaleX(0.9479);">NC...</div>
<div class="t" style="left:861.00px;top:258.10px;font-size:28px;color:#1a1a1a;font-weight:normal;font-family:'Liberation Sans', sans-serif;transform:scaleX(0.9588);">Accept</div>
<div class="t" style="left:980.62px;top:258.10px;font-size:28px;color:#1a1a1a;font-weight:normal;font-family:'Liberation Sans', sans-serif;transform:scaleX(1.0603);">Modify...</div>
<div class="t" style="left:1116.00px;top:258.10px;font-size:28px;color:#1a1a1a;font-weight:normal;font-family:'Liberation Sans', sans-serif;transform:scaleX(0.9790);">View</div>
<div class="t" style="left:1108.86px;top:297.10px;font-size:28px;color:#1a1a1a;font-weight:normal;font-family:'Liberation Sans', sans-serif;transform:scaleX(1.0138);">only...</div>
<div class="t" style="left:1209.12px;top:258.10px;font-size:28px;color:#1a1a1a;font-weight:normal;font-family:'Liberation Sans', sans-serif;transform:scaleX(1.0302);">nteractive</div>
<div class="t" style="left:1220.93px;top:297.10px;font-size:28px;color:#1a1a1a;font-weight:normal;font-family:'Liberation Sans', sans-serif;transform:scaleX(0.9526);">zones...</div>
<div class="t" style="left:1413.45px;top:170.10px;font-size:28px;color:#1a1a1a;font-weight:normal;font-family:'Liberation Sans', sans-serif;transform:scaleX(1.0100);">Interactive...</div>
<div class="t" style="left:1416.00px;top:223.10px;font-size:28px;color:#1a1a1a;font-weight:normal;font-family:'Liberation Sans', sans-serif;transform:scaleX(1.0181);">Automatic...</div>
<div class="t" style="left:1617.77px;top:258.10px;font-size:28px;color:#1a1a1a;font-weight:normal;font-family:'Liberation Sans', sans-serif;transform:scaleX(0.9954);">Nest</div>
<div class="t" style="left:1608.06px;top:297.10px;font-size:28px;color:#1a1a1a;font-weight:normal;font-family:'Liberation Sans', sans-serif;transform:scaleX(1.0667);">report</div>
<div class="t" style="left:1752.59px;top:170.10px;font-size:28px;color:#1a1a1a;font-weight:normal;font-family:'Liberation Sans', sans-serif;transform:scaleX(0.9841);">Job sheet</div>
<div class="t" style="left:1751.68px;top:223.10px;font-size:28px;color:#1a1a1a;font-weight:normal;font-family:'Liberation Sans', sans-serif;transform:scaleX(1.0365);">NC-code</div>
<div class="t" style="left:1751.75px;top:277.10px;font-size:28px;color:#1a1a1a;font-weight:normal;font-family:'Liberation Sans', sans-serif;transform:scaleX(1.0034);">Report</div>
<div class="t" style="left:1915.56px;top:258.10px;font-size:28px;color:#1a1a1a;font-weight:normal;font-family:'Liberation Sans', sans-serif;transform:scaleX(1.0910);">Move</div>
<div class="t" style="left:2031.66px;top:258.10px;font-size:28px;color:#1a1a1a;font-weight:normal;font-family:'Liberation Sans', sans-serif;transform:scaleX(1.0466);">Bump</div>
<div class="t" style="left:2009.11px;top:297.10px;font-size:28px;color:#1a1a1a;font-weight:normal;font-family:'Liberation Sans', sans-serif;transform:scaleX(1.0374);">nesting</div>
<div class="t" style="left:2171.11px;top:258.10px;font-size:28px;color:#1a1a1a;font-weight:normal;font-family:'Liberation Sans', sans-serif;transform:scaleX(1.0585);">Zoom</div>
<div class="t" style="left:2163.14px;top:297.10px;font-size:28px;color:#1a1a1a;font-weight:normal;font-family:'Liberation Sans', sans-serif;transform:scaleX(1.0257);">window</div>
<div class="t" style="left:2276.11px;top:258.10px;font-size:28px;color:#1a1a1a;font-weight:normal;font-family:'Liberation Sans', sans-serif;transform:scaleX(1.0585);">Zoom</div>
<div class="t" style="left:2285.34px;top:297.10px;font-size:28px;color:#1a1a1a;font-weight:normal;font-family:'Liberation Sans', sans-serif;transform:scaleX(0.9895);">back</div>
<div class="t" style="left:2379.11px;top:258.10px;font-size:28px;color:#1a1a1a;font-weight:normal;font-family:'Liberation Sans', sans-serif;transform:scaleX(1.0585);">Zoom</div>
<div class="t" style="left:2401.84px;top:297.10px;font-size:28px;color:#1a1a1a;font-weight:normal;font-family:'Liberation Sans', sans-serif;transform:scaleX(1.0337);">all</div>
<div style="position:absolute;left:903px;top:49px;width:362px;height:87px;border:7px solid #e46c6f;box-sizing:border-box"></div>
<div style="position:absolute;left:1079px;top:129px;width:132px;height:200px;border:7px solid #e46c6f;box-sizing:border-box;border-top:none"></div>
<div style="position:absolute;left:1121.5px;top:302px;width:48px;height:48px;border-radius:50%;background:#e76a6c"></div>
<div class="t" style="left:1136.77px;top:329.17px;font-size:35px;color:#fff;font-weight:normal;font-family:'Liberation Sans', sans-serif;transform:scaleX(0.8782);">5</div>
<div style="position:absolute;left:2px;top:403px;width:1257px;height:1420px;background:#f0f0f0;border:2px solid #5a5a5a;box-sizing:border-box"></div>
<div style="position:absolute;left:4px;top:405px;width:1253px;height:76px;background:#ffffff"></div>
<div style="position:absolute;left:943px;top:439px;width:25px;height:2px;background:#111"></div>
<div style="position:absolute;left:1063px;top:430px;width:25px;height:24px;border:2px solid #d0d0d0;box-sizing:border-box"></div>
<svg style="position:absolute;left:1182px;top:429px" width="28" height="26" viewBox="0 0 28 26"><path d="M1 1L27 25M27 1L1 25" stroke="#111" stroke-width="2.2"/></svg>
<div style="position:absolute;left:612px;top:510px;width:34px;height:33px;background:#fff;border:2px solid #cfcfcf;box-sizing:border-box"></div>
<div style="position:absolute;left:900px;top:510px;width:33px;height:33px;background:#fff;border:2px solid #cfcfcf;box-sizing:border-box"></div>
<div style="position:absolute;left:900px;top:564px;width:33px;height:32px;background:#fff;border:2px solid #cfcfcf;box-sizing:border-box"></div>
<div style="position:absolute;left:32px;top:654px;width:1197px;height:338px;background:#fff;border:2px solid #828790;box-sizing:border-box"></div>
<div style="position:absolute;left:277px;top:1092px;width:316px;height:53px;background:#cccccc;border:1px solid #c3c3c3;box-sizing:border-box"></div>
<div style="position:absolute;left:614px;top:1092px;width:305px;height:53px;background:#cccccc;border:1px solid #c3c3c3;box-sizing:border-box"></div>
<div style="position:absolute;left:939px;top:1092px;width:284px;height:53px;background:#cccccc;border:1px solid #c3c3c3;box-sizing:border-box"></div>
<div style="position:absolute;left:277px;top:1174px;width:316px;height:53px;background:#cccccc;border:1px solid #c3c3c3;box-sizing:border-box"></div>
<div style="position:absolute;left:614px;top:1174px;width:305px;height:53px;background:#cccccc;border:1px solid #c3c3c3;box-sizing:border-box"></div>
<div style="position:absolute;left:939px;top:1174px;width:284px;height:53px;background:#cccccc;border:1px solid #c3c3c3;box-sizing:border-box"></div>
<div style="position:absolute;left:277px;top:1257px;width:316px;height:53px;background:#cccccc;border:1px solid #c3c3c3;box-sizing:border-box"></div>
<div style="position:absolute;left:614px;top:1257px;width:305px;height:53px;background:#cccccc;border:1px solid #c3c3c3;box-sizing:border-box"></div>
<div style="position:absolute;left:939px;top:1257px;width:284px;height:53px;background:#cccccc;border:1px solid #c3c3c3;box-sizing:border-box"></div>
<div style="position:absolute;left:277px;top:1339px;width:316px;height:53px;background:#cccccc;border:1px solid #c3c3c3;box-sizing:border-box"></div>
<div style="position:absolute;left:614px;top:1339px;width:305px;height:53px;background:#cccccc;border:1px solid #c3c3c3;box-sizing:border-box"></div>
<div style="position:absolute;left:939px;top:1339px;width:284px;height:53px;background:#cccccc;border:1px solid #c3c3c3;box-sizing:border-box"></div>
<div style="position:absolute;left:277px;top:1421px;width:316px;height:53px;background:#cccccc;border:1px solid #c3c3c3;box-sizing:border-box"></div>
<div style="position:absolute;left:275px;top:1497px;width:33px;height:33px;background:#fff;border:2px solid #333;box-sizing:border-box"></div>
<div style="position:absolute;left:33px;top:1548px;width:550px;height:230px;border:2px solid #dcdcdc;box-sizing:border-box"></div>
<div style="position:absolute;left:45px;top:1544px;width:140px;height:10px;background:#f0f0f0"></div>
<div style="position:absolute;left:57px;top:1585px;width:502px;height:86px;border:2px solid #dcdcdc;box-sizing:border-box"></div>
<div style="position:absolute;left:70px;top:1581px;width:104px;height:10px;background:#f0f0f0"></div>
<div style="position:absolute;left:230px;top:1600px;width:111px;height:57px;background:#f0f0f0;border:2px solid #dadada;box-sizing:border-box"></div>
<div style="position:absolute;left:351px;top:1602px;width:185px;height:53px;background:#cccccc;border:1px solid #c3c3c3;box-sizing:border-box"></div>
<div style="position:absolute;left:59px;top:1705px;width:201px;height:53px;background:#cccccc;border:1px solid #c3c3c3;box-sizing:border-box"></div>
<div style="position:absolute;left:600px;top:1547px;width:628px;height:123px;border:2px solid #dcdcdc;box-sizing:border-box"></div>
<div style="position:absolute;left:613px;top:1543px;width:360px;height:10px;background:#f0f0f0"></div>
<div style="position:absolute;left:618px;top:1586px;width:284px;height:52px;background:#cccccc;border:1px solid #c3c3c3;box-sizing:border-box"></div>
<div style="position:absolute;left:931px;top:1586px;width:283px;height:52px;background:#cccccc;border:1px solid #c3c3c3;box-sizing:border-box"></div>
<div style="position:absolute;left:600px;top:1724px;width:33px;height:32px;background:#fff;border:2px solid #cfcfcf;box-sizing:border-box"></div>
<div style="position:absolute;left:1026px;top:1713px;width:201px;height:53px;background:#e1e1e1;border:1px solid #adadad;box-sizing:border-box"></div>
<div style="position:absolute;left:1184px;top:659px;width:40px;height:329px;background:#f0f0f0"></div>
<div class="t" style="left:20.12px;top:444.06px;font-size:31px;color:#111;font-weight:normal;font-family:'Liberation Sans', sans-serif;transform:scaleX(1.0332);">Interactive optimizing</div>
<div class="t" style="left:650.61px;top:527.10px;font-size:28px;color:#8c8c8c;font-weight:normal;font-family:'Liberation Sans', sans-serif;transform:scaleX(0.9924);">Graphic mode</div>
<div class="t" style="left:937.78px;top:527.10px;font-size:28px;color:#8c8c8c;font-weight:normal;font-family:'Liberation Sans', sans-serif;transform:scaleX(0.9917);">Delete hits</div>
<div class="t" style="left:938.69px;top:581.10px;font-size:28px;color:#8c8c8c;font-weight:normal;font-family:'Liberation Sans', sans-serif;transform:scaleX(0.9377);">Control (Virtual) hit</div>
<div class="t" style="left:31.45px;top:576.10px;font-size:28px;color:#222;font-weight:normal;font-family:'Liberation Sans', sans-serif;transform:scaleX(0.9827);">Tool Packages : 56  (choose one), Total Hits : 515</div>
<div class="t" style="left:74.74px;top:622.10px;font-size:28px;color:#222;font-weight:normal;font-family:'Liberation Sans', sans-serif;transform:scaleX(1.0070);">No.  Zone  ToolName</div>
<div class="t" style="left:530.71px;top:622.10px;font-size:28px;color:#222;font-weight:normal;font-family:'Liberation Sans', sans-serif;transform:scaleX(1.0219);">HitsNo.</div>
<div class="t" style="left:640.62px;top:622.10px;font-size:28px;color:#222;font-weight:normal;font-family:'Liberation Sans', sans-serif;transform:scaleX(0.9880);">CycleOrdrErNo</div>
<div class="t" style="left:840.61px;top:622.10px;font-size:28px;color:#222;font-weight:normal;font-family:'Liberation Sans', sans-serif;transform:scaleX(0.9922);">CycleSyncErNo</div>
<div class="t" style="left:88.00px;top:676.20px;font-size:27.4px;color:#2a2a2a;font-weight:normal;font-family:'Liberation Mono', monospace;"> 1  01 RD_04.2_MT24-8         16</div>
<div class="t" style="left:88.00px;top:709.00px;font-size:27.4px;color:#2a2a2a;font-weight:normal;font-family:'Liberation Mono', monospace;"> 2  01 RD_06.1_MT24-8          4</div>
<div class="t" style="left:88.00px;top:741.80px;font-size:27.4px;color:#2a2a2a;font-weight:normal;font-family:'Liberation Mono', monospace;"> 3  01 SQ_22.0_B              16</div>
<div class="t" style="left:88.00px;top:774.60px;font-size:27.4px;color:#2a2a2a;font-weight:normal;font-family:'Liberation Mono', monospace;"> 4  01 SQ_10.0_B               8</div>
<div class="t" style="left:88.00px;top:807.40px;font-size:27.4px;color:#2a2a2a;font-weight:normal;font-family:'Liberation Mono', monospace;"> 5  01 SHEAR                   9</div>
<div class="t" style="left:88.00px;top:840.20px;font-size:27.4px;color:#2a2a2a;font-weight:normal;font-family:'Liberation Mono', monospace;"> 6  01 RD_04.2_MT24-8         16</div>
<div class="t" style="left:88.00px;top:873.00px;font-size:27.4px;color:#2a2a2a;font-weight:normal;font-family:'Liberation Mono', monospace;"> 7  01 RD_06.1_MT24-8          4</div>
<div class="t" style="left:88.00px;top:905.80px;font-size:27.4px;color:#2a2a2a;font-weight:normal;font-family:'Liberation Mono', monospace;"> 8  01 SQ_22.0_B              16</div>
<div class="t" style="left:88.00px;top:938.60px;font-size:27.4px;color:#2a2a2a;font-weight:normal;font-family:'Liberation Mono', monospace;"> 9  01 SQ_10.0_B               8</div>
<div class="t" style="left:88.00px;top:971.40px;font-size:27.4px;color:#2a2a2a;font-weight:normal;font-family:'Liberation Mono', monospace;">10  01 SHEAR                   6</div>
<div class="t" style="left:30.81px;top:1066.10px;font-size:28px;color:#222;font-weight:normal;font-family:'Liberation Sans', sans-serif;transform:scaleX(0.9792);">No Plate Errors are found</div>
<div class="t" style="left:338.77px;top:1119.50px;font-size:28px;color:#838383;font-weight:normal;font-family:'Liberation Sans', sans-serif;transform:scaleX(0.9948);">Move to bottom</div>
<div class="t" style="left:661.74px;top:1119.50px;font-size:28px;color:#838383;font-weight:normal;font-family:'Liberation Sans', sans-serif;transform:scaleX(1.0106);">Relocate bottom</div>
<div class="t" style="left:1044.86px;top:1119.50px;font-size:28px;color:#838383;font-weight:normal;font-family:'Liberation Sans', sans-serif;transform:scaleX(1.0206);">Undo</div>
<div class="t" style="left:380.74px;top:1201.50px;font-size:28px;color:#838383;font-weight:normal;font-family:'Liberation Sans', sans-serif;transform:scaleX(1.0096);">Move up</div>
<div class="t" style="left:657.77px;top:1201.50px;font-size:28px;color:#838383;font-weight:normal;font-family:'Liberation Sans', sans-serif;transform:scaleX(0.9946);">Reverse hit order</div>
<div class="t" style="left:1044.64px;top:1201.50px;font-size:28px;color:#838383;font-weight:normal;font-family:'Liberation Sans', sans-serif;transform:scaleX(1.0544);">Redo</div>
<div class="t" style="left:361.75px;top:1284.50px;font-size:28px;color:#838383;font-weight:normal;font-family:'Liberation Sans', sans-serif;transform:scaleX(1.0055);">Move down</div>
<div class="t" style="left:723.66px;top:1284.50px;font-size:28px;color:#838383;font-weight:normal;font-family:'Liberation Sans', sans-serif;transform:scaleX(1.0446);">Delete</div>
<div class="t" style="left:1037.60px;top:1284.50px;font-size:28px;color:#838383;font-weight:normal;font-family:'Liberation Sans', sans-serif;">Cancel</div>
<div class="t" style="left:352.81px;top:1366.50px;font-size:28px;color:#838383;font-weight:normal;font-family:'Liberation Sans', sans-serif;transform:scaleX(0.9766);">Delete all hits</div>
<div class="t" style="left:739.77px;top:1366.50px;font-size:28px;color:#838383;font-weight:normal;font-family:'Liberation Sans', sans-serif;transform:scaleX(0.9787);">Split</div>
<div class="t" style="left:1047.71px;top:1366.50px;font-size:28px;color:#838383;font-weight:normal;font-family:'Liberation Sans', sans-serif;transform:scaleX(1.0259);">Save</div>
<div class="t" style="left:307.73px;top:1448.50px;font-size:28px;color:#838383;font-weight:normal;font-family:'Liberation Sans', sans-serif;transform:scaleX(1.0119);">Reverse nibble path</div>
<div class="t" style="left:313.78px;top:1515.10px;font-size:28px;color:#222;font-weight:normal;font-family:'Liberation Sans', sans-serif;transform:scaleX(0.9668);">Sheet unload (Auto)</div>
<div class="t" style="left:48.64px;top:1547.10px;font-size:28px;color:#222;font-weight:normal;font-family:'Liberation Sans', sans-serif;transform:scaleX(1.0522);">Packages</div>
<div class="t" style="left:73.66px;top:1584.10px;font-size:28px;color:#222;font-weight:normal;font-family:'Liberation Sans', sans-serif;transform:scaleX(1.0428);">Moving</div>
<div class="t" style="left:112.00px;top:1630.10px;font-size:28px;color:#a3a3a3;font-weight:normal;font-family:'Liberation Sans', sans-serif;transform:scaleX(0.9628);">After No.</div>
<div class="t" style="left:237.06px;top:1623.94px;font-size:27px;color:#6d6d6d;font-weight:normal;font-family:'Liberation Sans', sans-serif;">0</div>
<div class="t" style="left:406.66px;top:1630.10px;font-size:28px;color:#838383;font-weight:normal;font-family:'Liberation Sans', sans-serif;transform:scaleX(1.0449);">Move</div>
<div class="t" style="left:133.73px;top:1732.10px;font-size:28px;color:#838383;font-weight:normal;font-family:'Liberation Sans', sans-serif;transform:scaleX(1.0149);">Link</div>
<div class="t" style="left:617.63px;top:1548.10px;font-size:28px;color:#222;font-weight:normal;font-family:'Liberation Sans', sans-serif;transform:scaleX(0.9817);">Control mechanism changes</div>
<div class="t" style="left:723.66px;top:1608.10px;font-size:28px;color:#838383;font-weight:normal;font-family:'Liberation Sans', sans-serif;transform:scaleX(1.0449);">Make</div>
<div class="t" style="left:1030.69px;top:1614.10px;font-size:28px;color:#838383;font-weight:normal;font-family:'Liberation Sans', sans-serif;transform:scaleX(1.0317);">Delete</div>
<div class="t" style="left:639.44px;top:1741.10px;font-size:28px;color:#8c8c8c;font-weight:normal;font-family:'Liberation Sans', sans-serif;">Travel/Clamp zones</div>
<div class="t" style="left:1088.58px;top:1741.10px;font-size:28px;color:#111;font-weight:normal;font-family:'Liberation Sans', sans-serif;transform:scaleX(1.0140);">Close</div>
<div style="position:absolute;left:1184px;top:701px;width:40px;height:43px;background:#cdcdcd"></div>
<svg style="position:absolute;left:1193px;top:673px" width="20" height="14" viewBox="0 0 20 14"><path d="M2 12L10 3L18 12" stroke="#606060" stroke-width="3.2" fill="none"/></svg>
<svg style="position:absolute;left:1193px;top:961px" width="20" height="14" viewBox="0 0 20 14"><path d="M2 2L10 11L18 2" stroke="#606060" stroke-width="3.2" fill="none"/></svg>
</body></html>
